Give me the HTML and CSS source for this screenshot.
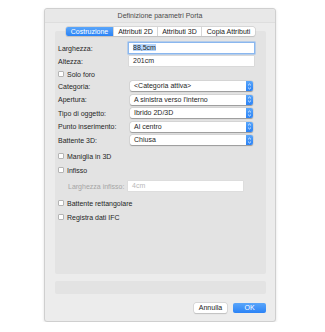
FILE: index.html
```html
<!DOCTYPE html>
<html>
<head>
<meta charset="utf-8">
<link rel="stylesheet" href="styles.css">
</head>
<body>
<div class="window">
  <div class="titlebar">Definizione parametri Porta</div>
  <div class="tabs">
    <div class="tab active t1">Costruzione</div>
    <div class="tab t2">Attributi 2D</div>
    <div class="tab t3">Attributi 3D</div>
    <div class="tab t4">Copia Attributi</div>
  </div>
  <div class="panel">
    <div class="row r-first">
      <span class="label">Larghezza:</span>
      <div class="field focus"><span class="sel">88,5cm</span></div>
    </div>
    <div class="row r-gap3">
      <span class="label">Altezza:</span>
      <div class="field">201cm</div>
    </div>
    <div class="row r-gap3 check">
      <span class="box"></span><span>Solo foro</span>
    </div>
    <div class="row r-gap2">
      <span class="label">Categoria:</span>
      <div class="select">&lt;Categoria attiva&gt;<span class="step"><svg width="7" height="9" viewBox="0 0 7 9"><path d="M2 3.4 L3.5 2 L5 3.4 M2 5.6 L3.5 7 L5 5.6" fill="none" stroke="#fff" stroke-width="0.8"/></svg></span></div>
    </div>
    <div class="row r-sel">
      <span class="label">Apertura:</span>
      <div class="select">A sinistra verso l'interno<span class="step"><svg width="7" height="9" viewBox="0 0 7 9"><path d="M2 3.4 L3.5 2 L5 3.4 M2 5.6 L3.5 7 L5 5.6" fill="none" stroke="#fff" stroke-width="0.8"/></svg></span></div>
    </div>
    <div class="row r-sel">
      <span class="label">Tipo di oggetto:</span>
      <div class="select">Ibrido 2D/3D<span class="step"><svg width="7" height="9" viewBox="0 0 7 9"><path d="M2 3.4 L3.5 2 L5 3.4 M2 5.6 L3.5 7 L5 5.6" fill="none" stroke="#fff" stroke-width="0.8"/></svg></span></div>
    </div>
    <div class="row r-sel">
      <span class="label">Punto inserimento:</span>
      <div class="select">Al centro<span class="step"><svg width="7" height="9" viewBox="0 0 7 9"><path d="M2 3.4 L3.5 2 L5 3.4 M2 5.6 L3.5 7 L5 5.6" fill="none" stroke="#fff" stroke-width="0.8"/></svg></span></div>
    </div>
    <div class="row r-sel">
      <span class="label">Battente 3D:</span>
      <div class="select">Chiusa<span class="step"><svg width="7" height="9" viewBox="0 0 7 9"><path d="M2 3.4 L3.5 2 L5 3.4 M2 5.6 L3.5 7 L5 5.6" fill="none" stroke="#fff" stroke-width="0.8"/></svg></span></div>
    </div>
    <div class="row r-gap6 check">
      <span class="box"></span><span>Maniglia in 3D</span>
    </div>
    <div class="row r-gap4 check">
      <span class="box"></span><span>Infisso</span>
    </div>
    <div class="row r-gap6 indent">
      <span class="label dim">Larghezza infisso:</span>
      <div class="field disabled">4cm</div>
    </div>
    <div class="row r-gap7 check">
      <span class="box"></span><span>Battente rettangolare</span>
    </div>
    <div class="row r-gap4 check">
      <span class="box"></span><span>Registra dati IFC</span>
    </div>
  </div>
  <div class="statusbar"></div>
  <div class="buttons">
    <div class="btn">Annulla</div>
    <div class="btn primary">OK</div>
  </div>
</div>
</body>
</html>
```
FILE: styles.css
```css
html, body {
  margin: 0;
  padding: 0;
  background: #ffffff;
}
body {
  font-family: "Liberation Sans", Arial, sans-serif;
  font-size: 7px;
  color: #262626;
}
.window {
  margin: 8px 0 0 44px;
  width: 232px;
  height: 314px;
  box-sizing: border-box;
  background: #ececec;
  border: 1px solid #cfcfcf;
  border-radius: 3px;
  box-shadow: 0 1px 3px rgba(0,0,0,0.12);
  display: flex;
  flex-direction: column;
}
.titlebar {
  height: 13px;
  line-height: 13px;
  text-align: center;
  color: #4a4a4a;
  background: #e8e8e8;
  border-bottom: 1px solid #dedede;
  border-radius: 3px 3px 0 0;
  font-size: 7px;
}
.tabs {
  display: flex;
  margin: 4px 0 -5px 21px;
  height: 9px;
  position: relative;
  z-index: 1;
  align-self: flex-start;
  border-radius: 2px;
  box-shadow: 0 0 0 0.5px #c4c4c4, 0 0.5px 1px rgba(0,0,0,0.15);
  background: #fff;
}
.tab {
  height: 9px;
  line-height: 9px;
  text-align: center;
  color: #222;
  border-left: 1px solid #d6d6d6;
  box-sizing: border-box;
}
.tab.t1 { width: 47px; border-left: none; }
.tab.t2 { width: 44px; }
.tab.t3 { width: 44px; }
.tab.t4 { width: 54px; }
.tab.active {
  background: linear-gradient(#5aa6fa, #2b83f6);
  color: #fff;
  border-radius: 2px 0 0 2px;
}
.panel {
  margin: 0 9px 0 10px;
  height: 243px;
  background: #e3e3e3;
  border-radius: 2px;
  padding: 12px 0 0 3px;
  box-sizing: border-box;
  display: flex;
  flex-direction: column;
}
.row {
  height: 10px;
  display: flex;
  align-items: center;
  flex-shrink: 0;
}
.r-first { margin-top: 0; }
.r-gap2 { margin-top: 2px; }
.r-gap3 { margin-top: 3px; }
.r-gap4 { margin-top: 4px; }
.r-gap6 { margin-top: 6px; }
.r-gap7 { margin-top: 7px; }
.r-sel { margin-top: 3.5px; }
.label {
  width: 71px;
  flex-shrink: 0;
}
.field {
  width: 125px;
  height: 10px;
  line-height: 10px;
  box-sizing: border-box;
  background: #fff;
  padding-left: 4px;
  box-shadow: 0 0 0 0.5px #cfcfcf;
}
.field.focus {
  box-shadow: 0 0 0 1.5px #8ab7ef;
}
.sel {
  background: #b5d5fb;
}
.indent .label {
  padding-left: 10px;
  width: 70px;
  box-sizing: border-box;
}
.label.dim { color: #a5a5a5; }
.field.disabled {
  width: 115px;
  color: #b9b9b9;
  box-shadow: 0 0 0 0.5px #d8d8d8;
}
.select {
  width: 123px;
  height: 10px;
  line-height: 10px;
  box-sizing: border-box;
  background: #fff;
  padding-left: 4px;
  border-radius: 2px;
  box-shadow: 0 0.5px 1px rgba(0,0,0,0.3), 0 0 0 0.5px #d2d2d2;
  display: flex;
  justify-content: space-between;
  margin-left: 1px;
}
.step {
  width: 7px;
  height: 10px;
  background: linear-gradient(#5aa6fa, #2b83f6);
  border-radius: 0 2px 2px 0;
  display: flex;
  align-items: center;
  justify-content: center;
}
.step svg { display: block; }
.check span:last-child { margin-left: 3px; }
.box {
  width: 6px;
  height: 6px;
  background: #fff;
  border: 0.5px solid #b4b4b4;
  border-radius: 1px;
  box-sizing: border-box;
}
.statusbar {
  margin: 7px 9px 0 10px;
  height: 13px;
  background: #e3e3e3;
  border-radius: 2px;
}
.buttons {
  display: flex;
  justify-content: flex-end;
  gap: 6px;
  margin: 9px 9px 0 0;
}
.btn {
  width: 33px;
  height: 10px;
  line-height: 10px;
  text-align: center;
  background: #fff;
  border-radius: 2px;
  box-shadow: 0 0 0 0.5px #c8c8c8, 0 0.5px 1px rgba(0,0,0,0.2);
  color: #222;
}
.btn.primary {
  background: linear-gradient(#5aa6fa, #2b83f6);
  color: #fff;
  box-shadow: none;
}
```
